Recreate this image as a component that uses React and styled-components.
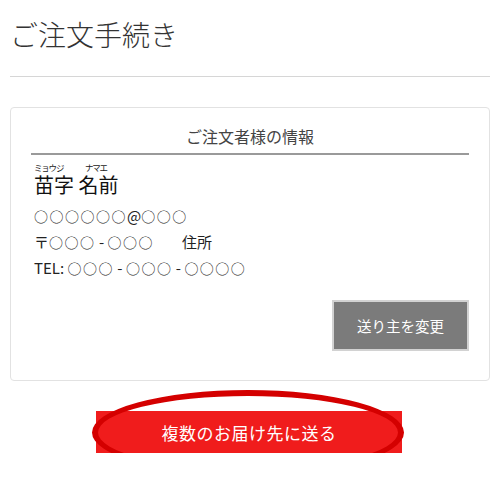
import React from 'react';
import styled, { createGlobalStyle } from 'styled-components';

const GlobalStyle = createGlobalStyle`
    body {
        margin: 0;
        background: #fff;
        font-family: "Noto Sans CJK JP", "Noto Sans", sans-serif;
        color: #222;
    }
`;

const Page = styled.div`
    padding: 0 10px;
`;

const Title = styled.h1`
    margin: 0;
    padding-top: 14px;
    font-size: 28px;
    line-height: 40px;
    font-weight: 300;
    color: #333;
`;

const Divider = styled.div`
    margin-top: 22px;
    height: 1px;
    background: #d6d6d6;
`;

const Card = styled.div`
    margin-top: 30px;
    border: 1px solid #e2e2e2;
    border-radius: 4px;
    padding: 0 20px 29px;
`;

const CardHeader = styled.div`
    padding: 16px 0 5px;
    text-align: center;
    font-size: 16px;
    line-height: 24px;
    color: #444;
    border-bottom: 2px solid #9a9a9a;
`;

const Details = styled.div`
    padding-left: 3px;
`;

const Furigana = styled.div`
    display: flex;
    margin-top: 8px;
    font-size: 8.5px;
    line-height: 9px;
    letter-spacing: -1.2px;
    color: #222;
`;

const Kana = styled.span`
    width: ${(p) => p.$width}px;
`;

const Name = styled.div`
    margin-top: 2px;
    font-size: 20px;
    line-height: 22px;
    color: #111;
`;

const InfoLines = styled.div`
    margin-top: 7px;
    font-size: 15px;
    line-height: 26px;
    color: #222;
`;

// placeholder circles with a little air between them
const Blank = styled.span`
    font-size: 14px;
    line-height: 0;
    letter-spacing: 1.5px;
`;

const Gap = styled.span`
    display: inline-block;
    width: ${(p) => p.$width}px;
`;

const ButtonRow = styled.div`
    display: flex;
    justify-content: flex-end;
    margin-top: 19px;
`;

const GrayButton = styled.button`
    width: 137px;
    height: 51px;
    background: #7b7b7b;
    border: 2px solid #d2d2d2;
    color: #fff;
    font-family: inherit;
    font-size: 14.5px;
    cursor: pointer;
`;

const Bottom = styled.div`
    display: flex;
    justify-content: center;
    margin-top: 30px;
`;

const RedWrap = styled.div`
    position: relative;
    margin-right: 2px;
`;

const RedButton = styled.button`
    display: block;
    width: 306px;
    height: 42px;
    background: #f01c1c;
    border: none;
    color: #fff;
    font-family: inherit;
    font-size: 17px;
    letter-spacing: 0.5px;
    cursor: pointer;
`;

const Highlight = styled.div`
    position: absolute;
    left: -4px;
    top: -21px;
    width: 312px;
    height: 85px;
    box-sizing: border-box;
    border: 6px solid #d40000;
    border-radius: 50%;
    pointer-events: none;
`;

export default function App() {
    return (
        <Page>
            <GlobalStyle />
            <Title>ご注文手続き</Title>
            <Divider />
            <Card>
                <CardHeader>ご注文者様の情報</CardHeader>
                <Details>
                    <Furigana>
                        <Kana $width={51}>ミョウジ</Kana>
                        <Kana $width={40}>ナマエ</Kana>
                    </Furigana>
                    <Name>苗字 名前</Name>
                    <InfoLines>
                        <div><Blank>○○○○○○</Blank>@<Blank>○○○</Blank></div>
                        <div>〒<Blank>○○○</Blank> - <Blank>○○○</Blank><Gap $width={28} />住所</div>
                        <div>TEL: <Blank>○○○</Blank> - <Blank>○○○</Blank> - <Blank>○○○○</Blank></div>
                    </InfoLines>
                </Details>
                <ButtonRow>
                    <GrayButton>送り主を変更</GrayButton>
                </ButtonRow>
            </Card>
            <Bottom>
                <RedWrap>
                    <RedButton>複数のお届け先に送る</RedButton>
                    <Highlight />
                </RedWrap>
            </Bottom>
        </Page>
    );
}
